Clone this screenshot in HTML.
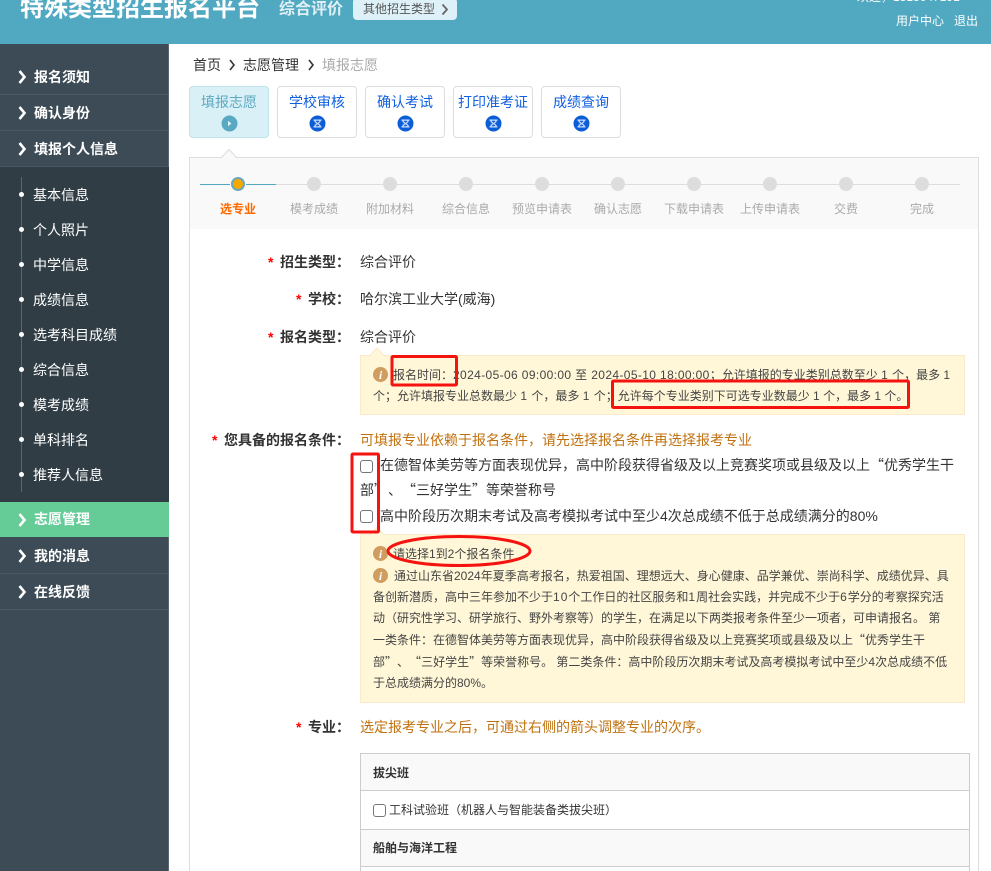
<!DOCTYPE html>
<html lang="zh"><head><meta charset="utf-8"><title>特殊类型招生报名平台</title>
<style>
*{box-sizing:border-box;margin:0;padding:0}
html,body{width:991px;height:871px;overflow:hidden;background:#fff}
body{position:relative;font-family:"Liberation Sans","Noto Sans CJK SC",sans-serif;color:#333;font-size:14px;text-spacing-trim:space-all}
.a{position:absolute;white-space:nowrap}
.q{font-family:"Noto Sans CJK SC",sans-serif}
.d{letter-spacing:1px}
.dt{letter-spacing:.37px}
.hd{left:0;top:0;width:991px;height:44px;background:#50a8c1}
.side{left:0;top:44px;width:169px;height:827px;background:#3c4b55;border-right:1px solid #5c666d}
.m{left:0;width:168px;height:36px;border-bottom:1px solid #4a5863;color:#fff;font-weight:700;font-size:14px;line-height:36px;padding-left:34px}
.chev{position:absolute;left:18px;top:11px}
.sub{left:0;top:167px;width:169px;height:335px;background:#303d45}
.si{left:33px;color:#fff;font-size:14px;line-height:20px}
.dot{left:19px;width:5px;height:5px;border-radius:50%;background:#fff}
.tab{top:86px;width:80px;height:52px;border:1px solid #ddd;border-radius:4px;text-align:center;color:#0f5fe0;font-size:14px;line-height:20px;padding-top:5px;background:#fff}
.tab svg{position:absolute;left:31px;top:28px}
.st{top:201px;width:76px;text-align:center;font-size:12px;color:#aaa;line-height:16px}
.c{top:177px;width:14px;height:14px;border-radius:50%;background:#ddd}
.lab{font-weight:700;color:#333;font-size:14px;line-height:20px}
.star{color:#f00;font-weight:700;font-size:14px;line-height:20px}
.val{left:360px;font-size:14px;line-height:20px;color:#333}
.note{background:#fff7d8;border:1px solid #fbe9cc}
.t12{font-size:12px;line-height:20px;color:#444;left:373px}
.org{color:#c0710f;font-size:14px;line-height:20px;left:360px}
.cb{width:13px;height:13px;border:1px solid #767676;border-radius:3px;background:#fff}
.tr{left:360px;width:610px;border:1px solid #ccc;font-size:12px;line-height:20px;padding-left:12px}
</style></head><body>

<div class="a hd"></div>
<div class="a" style="left:20px;top:-8px;font-size:24px;font-weight:700;color:#fff;line-height:34px">特殊类型招生报名平台</div>
<div class="a" style="left:279px;top:-2px;font-size:16px;font-weight:700;color:#dff1f6;line-height:24px">综合评价</div>
<div class="a" style="left:353px;top:-2px;width:104px;height:22px;background:#dff1f8;border-radius:4px;font-size:12px;color:#555;line-height:22px;padding-left:10px">其他招生类型<svg style="position:absolute;left:88px;top:5px" width="9" height="13" viewBox="0 0 9 13"><path d="M1.500 1.500l4.500 5-4.500 5" fill="none" stroke="#666" stroke-width="1.800"/></svg></div>
<div class="a" style="left:857px;top:-13px;font-size:12px;color:#fff;line-height:20px">欢迎，1313047191</div>
<div class="a" style="left:896px;top:11px;font-size:12px;color:#fff;line-height:20px">用户中心</div>
<div class="a" style="left:954px;top:11px;font-size:12px;color:#fff;line-height:20px">退出</div>

<div class="a side"></div>
<div class="a m" style="top:59px"><svg class="chev" width="9" height="14" viewBox="0 0 9 14"><path d="M1.500 1l5 6-5 6" fill="none" stroke="#fff" stroke-width="2.600"/></svg>报名须知</div>
<div class="a m" style="top:95px"><svg class="chev" width="9" height="14" viewBox="0 0 9 14"><path d="M1.500 1l5 6-5 6" fill="none" stroke="#fff" stroke-width="2.600"/></svg>确认身份</div>
<div class="a m" style="top:131px"><svg class="chev" width="9" height="14" viewBox="0 0 9 14"><path d="M1.500 1l5 6-5 6" fill="none" stroke="#fff" stroke-width="2.600"/></svg>填报个人信息</div>
<div class="a sub"></div>
<div class="a" style="left:21px;top:177px;width:1px;height:315px;background:#5b6770"></div>
<div class="a dot" style="top:192px"></div><div class="a si" style="top:185px">基本信息</div>
<div class="a dot" style="top:227px"></div><div class="a si" style="top:220px">个人照片</div>
<div class="a dot" style="top:262px"></div><div class="a si" style="top:255px">中学信息</div>
<div class="a dot" style="top:297px"></div><div class="a si" style="top:290px">成绩信息</div>
<div class="a dot" style="top:332px"></div><div class="a si" style="top:325px">选考科目成绩</div>
<div class="a dot" style="top:367px"></div><div class="a si" style="top:360px">综合信息</div>
<div class="a dot" style="top:402px"></div><div class="a si" style="top:395px">模考成绩</div>
<div class="a dot" style="top:437px"></div><div class="a si" style="top:430px">单科排名</div>
<div class="a dot" style="top:472px"></div><div class="a si" style="top:465px">推荐人信息</div>
<div class="a m" style="top:502px;height:35px;background:#65cc98;border:0;width:169px;line-height:35px"><svg class="chev" width="9" height="14" viewBox="0 0 9 14"><path d="M1.500 1l5 6-5 6" fill="none" stroke="#fff" stroke-width="2.600"/></svg>志愿管理</div>
<div class="a m" style="top:538px"><svg class="chev" width="9" height="14" viewBox="0 0 9 14"><path d="M1.500 1l5 6-5 6" fill="none" stroke="#fff" stroke-width="2.600"/></svg>我的消息</div>
<div class="a m" style="top:574px"><svg class="chev" width="9" height="14" viewBox="0 0 9 14"><path d="M1.500 1l5 6-5 6" fill="none" stroke="#fff" stroke-width="2.600"/></svg>在线反馈</div>

<div class="a" style="left:193px;top:55px;line-height:20px;color:#333">首页</div>
<svg class="a" style="left:229px;top:59px" width="7" height="12" viewBox="0 0 7 12"><path d="M1 1l4 5-4 5" fill="none" stroke="#333" stroke-width="1.600"/></svg>
<div class="a" style="left:243px;top:55px;line-height:20px;color:#333">志愿管理</div>
<svg class="a" style="left:308px;top:59px" width="7" height="12" viewBox="0 0 7 12"><path d="M1 1l4 5-4 5" fill="none" stroke="#333" stroke-width="1.600"/></svg>
<div class="a" style="left:322px;top:55px;line-height:20px;color:#aaa">填报志愿</div>

<div class="a tab" style="left:189px;background:#d9f0f7;border-color:#c0e2ec;color:#5da9c0"><span>填报志愿</span><svg width="17" height="17" viewBox="0 0 17 17"><circle cx="8.500" cy="8.500" r="8" fill="#59a9c3"/><path d="M7 5.800l3.500 2.700-3.500 2.700z" fill="#d9f0f7"/></svg></div>
<div class="a tab" style="left:277px">学校审核<svg width="17" height="17" viewBox="0 0 17 17"><circle cx="8.500" cy="8.500" r="8" fill="#0b5ed7"/><path d="M4.500 4.500h8v1.200h-1v1.300l-2 1.500 2 1.500v1.300h1v1.200h-8v-1.200h1v-1.300l2-1.500-2-1.500V5.700h-1z" fill="#cfe0fb"/><path d="M6.800 5.800h3.400v.8L8.500 7.900 6.800 6.600zM6.800 11.300v-.8l1.700-1.300 1.700 1.300v.8z" fill="#0b5ed7"/></svg></div>
<div class="a tab" style="left:365px">确认考试<svg width="17" height="17" viewBox="0 0 17 17"><circle cx="8.500" cy="8.500" r="8" fill="#0b5ed7"/><path d="M4.500 4.500h8v1.200h-1v1.300l-2 1.500 2 1.500v1.300h1v1.200h-8v-1.200h1v-1.300l2-1.500-2-1.500V5.700h-1z" fill="#cfe0fb"/><path d="M6.800 5.800h3.400v.8L8.500 7.900 6.800 6.600zM6.800 11.300v-.8l1.700-1.300 1.700 1.300v.8z" fill="#0b5ed7"/></svg></div>
<div class="a tab" style="left:453px">打印准考证<svg width="17" height="17" viewBox="0 0 17 17"><circle cx="8.500" cy="8.500" r="8" fill="#0b5ed7"/><path d="M4.500 4.500h8v1.200h-1v1.300l-2 1.500 2 1.500v1.300h1v1.200h-8v-1.200h1v-1.300l2-1.500-2-1.500V5.700h-1z" fill="#cfe0fb"/><path d="M6.800 5.800h3.400v.8L8.500 7.900 6.800 6.600zM6.800 11.300v-.8l1.700-1.300 1.700 1.300v.8z" fill="#0b5ed7"/></svg></div>
<div class="a tab" style="left:541px">成绩查询<svg width="17" height="17" viewBox="0 0 17 17"><circle cx="8.500" cy="8.500" r="8" fill="#0b5ed7"/><path d="M4.500 4.500h8v1.200h-1v1.300l-2 1.500 2 1.500v1.300h1v1.200h-8v-1.200h1v-1.300l2-1.500-2-1.500V5.700h-1z" fill="#cfe0fb"/><path d="M6.800 5.800h3.400v.8L8.500 7.900 6.800 6.600zM6.800 11.300v-.8l1.700-1.300 1.700 1.300v.8z" fill="#0b5ed7"/></svg></div>

<div class="a" style="left:189px;top:157px;width:790px;height:720px;border:1px solid #ddd;background:#fff"></div>
<div class="a" style="left:190px;top:158px;width:788px;height:71px;background:#f9f9f9"></div>
<svg class="a" style="left:220px;top:148px" width="20" height="11" viewBox="0 0 20 11"><path d="M1 10L9 1.500 17 10" fill="#f9f9f9" stroke="#ddd"/></svg>

<div class="a" style="left:200px;top:184px;width:760px;height:1px;background:#ddd"></div>
<div class="a" style="left:200px;top:184px;width:76px;height:1px;background:#50a8c1"></div>
<div class="a" style="left:230px;top:176px;width:16px;height:16px;background:#f9f9f9"></div>
<div class="a" style="left:231px;top:177px;width:14px;height:14px;border-radius:50%;background:#f5a800;border:2px solid #6aa7bb"></div>
<div class="a c" style="left:307px"></div><div class="a c" style="left:383px"></div><div class="a c" style="left:459px"></div><div class="a c" style="left:535px"></div><div class="a c" style="left:611px"></div><div class="a c" style="left:687px"></div><div class="a c" style="left:763px"></div><div class="a c" style="left:839px"></div><div class="a c" style="left:915px"></div>
<div class="a st" style="left:200px;color:#ff6a00;font-weight:700">选专业</div>
<div class="a st" style="left:276px">模考成绩</div>
<div class="a st" style="left:352px">附加材料</div>
<div class="a st" style="left:428px">综合信息</div>
<div class="a st" style="left:504px">预览申请表</div>
<div class="a st" style="left:580px">确认志愿</div>
<div class="a st" style="left:656px">下载申请表</div>
<div class="a st" style="left:732px">上传申请表</div>
<div class="a st" style="left:808px">交费</div>
<div class="a st" style="left:884px">完成</div>

<div class="a star" style="left:268px;top:252px">*</div><div class="a lab" style="left:280px;top:252px">招生类型：</div><div class="a val" style="top:252px">综合评价</div>
<div class="a star" style="left:296px;top:289px">*</div><div class="a lab" style="left:308px;top:289px">学校：</div><div class="a val" style="top:289px">哈尔滨工业大学(威海)</div>
<div class="a star" style="left:268px;top:327px">*</div><div class="a lab" style="left:280px;top:327px">报名类型：</div><div class="a val" style="top:327px">综合评价</div>

<div class="a note" style="left:360px;top:355px;width:605px;height:60px"></div>
<svg class="a" style="left:368px;top:347px" width="18" height="10" viewBox="0 0 18 10"><path d="M1 9.500L9 1l8 8.500" fill="#fff7d8" stroke="#fbe9cc"/></svg>
<svg class="a" style="left:373px;top:367px" width="15" height="15" viewBox="0 0 15 15"><circle cx="7.500" cy="7.500" r="7.500" fill="#cf9d60"/><text x="7.500" y="12" text-anchor="middle" font-family="Liberation Serif" font-style="italic" font-weight="700" font-size="12" fill="#fff">i</text></svg>
<div class="a t12" style="left:393px;top:365px">报名时间：<span class="dt">2024-05-06 09:00:00 至 2024-05-10 18:00:00</span>；允许填报的专业类别总数至少 <span class="d">1</span> 个，最多 <span class="d">1</span></div>
<div class="a t12" style="top:386px">个；允许填报专业总数最少 <span class="d">1</span> 个，最多 <span class="d">1</span> 个；允许每个专业类别下可选专业数最少 1 个，最多 1 个。</div>

<div class="a star" style="left:212px;top:430px">*</div><div class="a lab" style="left:224px;top:430px">您具备的报名条件：</div>
<div class="a org" style="top:430px">可填报专业依赖于报名条件，请先选择报名条件再选择报考专业</div>
<div class="a cb" style="left:360px;top:460px"></div>
<div class="a" style="left:380px;top:455px;line-height:20px">在德智体美劳等方面表现优异，高中阶段获得省级及以上竞赛奖项或县级及以上<span class="q">“</span>优秀学生干</div>
<div class="a" style="left:360px;top:480px;line-height:20px">部<span class="q">”</span>、<span class="q">“</span>三好学生<span class="q">”</span>等荣誉称号</div>
<div class="a cb" style="left:360px;top:510px"></div>
<div class="a" style="left:380px;top:506px;line-height:20px">高中阶段历次期末考试及高考模拟考试中至少4次总成绩不低于总成绩满分的80%</div>

<div class="a note" style="left:360px;top:534px;width:605px;height:169px"></div>
<svg class="a" style="left:368px;top:526px" width="18" height="10" viewBox="0 0 18 10"><path d="M1 9.500L9 1l8 8.500" fill="#fff7d8" stroke="#fbe9cc"/></svg>
<svg class="a" style="left:373px;top:546px" width="15" height="15" viewBox="0 0 15 15"><circle cx="7.500" cy="7.500" r="7.500" fill="#cf9d60"/><text x="7.500" y="12" text-anchor="middle" font-family="Liberation Serif" font-style="italic" font-weight="700" font-size="12" fill="#fff">i</text></svg>
<div class="a t12" style="left:393px;top:544px">请选择1到2个报名条件</div>
<svg class="a" style="left:373px;top:568px" width="15" height="15" viewBox="0 0 15 15"><circle cx="7.500" cy="7.500" r="7.500" fill="#cf9d60"/><text x="7.500" y="12" text-anchor="middle" font-family="Liberation Serif" font-style="italic" font-weight="700" font-size="12" fill="#fff">i</text></svg>
<div class="a t12" style="left:394px;top:566px">通过山东省2024年夏季高考报名，热爱祖国、理想远大、身心健康、品学兼优、崇尚科学、成绩优异、具</div>
<div class="a t12" style="top:587px">备创新潜质，高中三年参加不少于<span class="d">10</span>个工作日的社区服务和<span class="d">1</span>周社会实践，并完成不少于<span class="d">6</span>学分的考察探究活</div>
<div class="a t12" style="top:608px">动（研究性学习、研学旅行、野外考察等）的学生，在满足以下两类报考条件至少一项者，可申请报名。 第</div>
<div class="a t12" style="top:630px">一类条件：在德智体美劳等方面表现优异，高中阶段获得省级及以上竞赛奖项或县级及以上<span class="q">“</span>优秀学生干</div>
<div class="a t12" style="top:652px">部<span class="q">”</span>、<span class="q">“</span>三好学生<span class="q">”</span>等荣誉称号。 第二类条件：高中阶段历次期末考试及高考模拟考试中至少4次总成绩不低</div>
<div class="a t12" style="top:673px">于总成绩满分的80%。</div>

<div class="a star" style="left:296px;top:717px">*</div><div class="a lab" style="left:308px;top:717px">专业：</div>
<div class="a org" style="top:717px">选定报考专业之后，可通过右侧的箭头调整专业的次序。</div>

<div class="a tr" style="top:753px;height:38px;background:#f9f9f9;font-weight:700;line-height:38px">拔尖班</div>
<div class="a tr" style="top:790px;height:40px;line-height:38px;padding-left:28px">工科试验班（机器人与智能装备类拔尖班）</div>
<div class="a cb" style="left:373px;top:804px"></div>
<div class="a tr" style="top:829px;height:38px;background:#f9f9f9;font-weight:700;line-height:37px">船舶与海洋工程</div>
<div class="a tr" style="top:866px;height:10px"></div>

<svg class="a" style="left:0;top:0" width="991" height="871" viewBox="0 0 991 871">
<g fill="none" stroke="#f5130f" stroke-linejoin="round">
<rect x="392" y="356.500" width="64.500" height="28.500" rx="1" stroke-width="3"/>
<rect x="612.500" y="381" width="296" height="26.500" rx="1" stroke-width="3"/>
<rect x="352" y="454" width="26.500" height="78" rx="1" stroke-width="3"/>
<ellipse cx="459" cy="551" rx="71" ry="14.500" stroke-width="3"/>
</g></svg>
</body></html>
